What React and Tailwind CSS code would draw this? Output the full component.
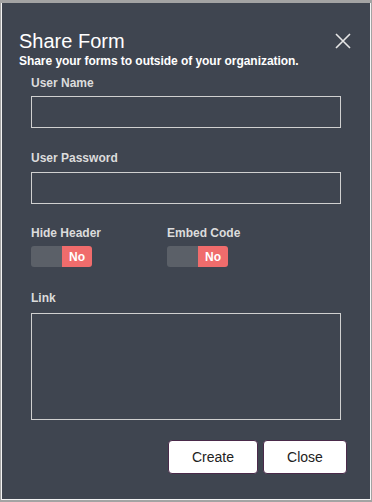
export default function App() {
  const Toggle = () => (
    <div className="flex h-[21px] w-[61px] overflow-hidden rounded-[3px]">
      <div className="w-[31px] bg-[#5b6068]" />
      <div className="flex flex-1 items-center justify-center bg-[#f06c6c] text-[12px] font-bold text-white">No</div>
    </div>
  );
  return (
    <div className="h-[502px] w-[372px] bg-[#a3a3a3] pt-[3px] pl-[1px] pr-[1px] pb-[2px]" style={{ fontFamily: '"Liberation Sans", Arial, sans-serif' }}>
      <div className="relative h-full w-full border-r border-b border-l border-[#f4f4f4] bg-[#3f4550] pl-[17px]">
        <div className="pt-[26px] text-[20px] leading-[24px] text-white">Share Form</div>
        <svg className="absolute right-[19px] top-[30px]" width="16" height="16" viewBox="0 0 16 16">
          <path d="M1 1L15 15M15 1L1 15" stroke="#e6e6e6" strokeWidth="1.6" />
        </svg>
        <div className="mt-[1px] text-[12px] font-bold leading-[14px] tracking-[-0.05px] text-white">Share your forms to outside of your organization.</div>
        <div className="pl-[12px] pr-[29px] text-[#dcdcdc]">
          <div className="mt-[8px] text-[12px] font-bold leading-[14px]">User Name</div>
          <div className="mt-[6px] h-[32px] border border-[#d0d0d0]" />
          <div className="mt-[23px] text-[12px] font-bold leading-[14px]">User Password</div>
          <div className="mt-[7px] h-[32px] border border-[#d0d0d0]" />
          <div className="mt-[22px] flex">
            <div className="w-[136px]">
              <div className="text-[12px] font-bold leading-[14px]">Hide Header</div>
              <div className="mt-[6px]"><Toggle /></div>
            </div>
            <div>
              <div className="text-[12px] font-bold leading-[14px]">Embed Code</div>
              <div className="mt-[6px]"><Toggle /></div>
            </div>
          </div>
          <div className="mt-[24px] text-[12px] font-bold leading-[14px]">Link</div>
          <div className="mt-[8px] h-[107px] border border-[#d0d0d0]" />
          <div className="mt-[20px] mr-[-6px] flex justify-end gap-[5px]">
            <button className="h-[34px] w-[90px] rounded-[4px] border border-[#4a2a4a] bg-white text-[14px] text-[#222]">Create</button>
            <button className="h-[34px] w-[84px] rounded-[4px] border border-[#4a2a4a] bg-white text-[14px] text-[#222]">Close</button>
          </div>
        </div>
      </div>
    </div>
  );
}
